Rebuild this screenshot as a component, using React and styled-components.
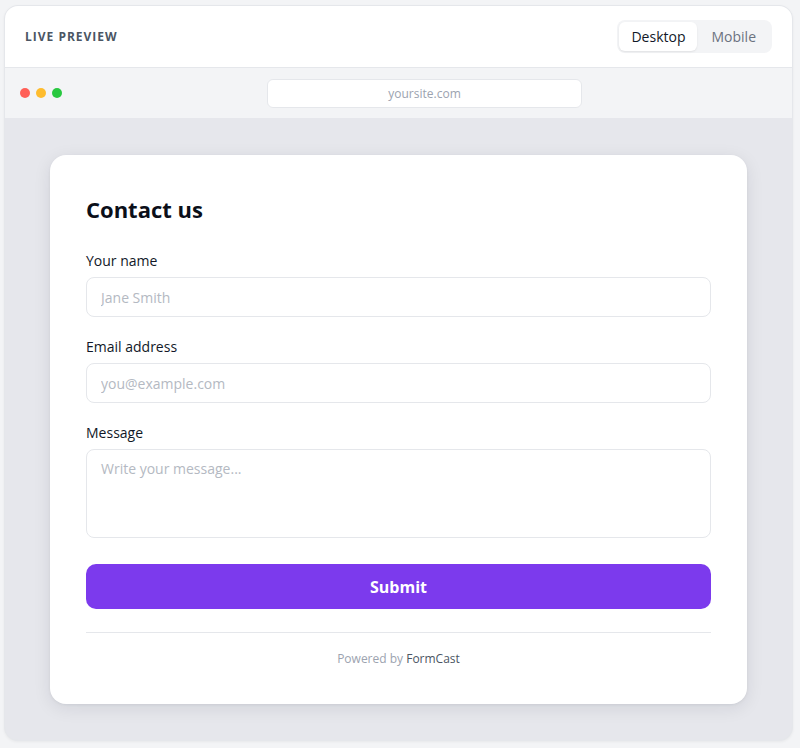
import React from "react";
import styled, { createGlobalStyle } from "styled-components";

const Global = createGlobalStyle`
  html, body { margin: 0; padding: 0; background: #f3f4f6; }
  body { font-family: "Open Sans", "Noto Sans", sans-serif; }
  * { box-sizing: border-box; }
`;

const Page = styled.div`
  padding: 5px 7px 7px 4px;
`;

const Frame = styled.div`
  height: 736px;
  display: flex;
  flex-direction: column;
  background: #e6e7ec;
  border: 1px solid #e5e7eb;
  border-radius: 14px;
  overflow: hidden;
  box-shadow: 0 1px 3px rgba(0, 0, 0, 0.05);
`;

const Header = styled.div`
  height: 62px;
  flex: none;
  display: flex;
  align-items: center;
  justify-content: space-between;
  padding: 0 20px;
  background: #fff;
  border-bottom: 1px solid #e5e7eb;
`;

const Eyebrow = styled.div`
  font-size: 12px;
  font-weight: 700;
  letter-spacing: 1px;
  color: #4b5563;
  text-transform: uppercase;
`;

const Toggle = styled.div`
  display: flex;
  padding: 2px;
  background: #f3f4f6;
  border-radius: 8px;
`;

const ToggleBtn = styled.button`
  border: none;
  font-family: inherit;
  font-size: 14px;
  height: 29px;
  padding: 0 ${(p) => (p.$active ? "12px" : "14px")};
  border-radius: 6px;
  cursor: pointer;
  background: ${(p) => (p.$active ? "#fff" : "transparent")};
  color: ${(p) => (p.$active ? "#111827" : "#6b7280")};
  box-shadow: ${(p) => (p.$active ? "0 1px 2px rgba(0,0,0,0.08)" : "none")};
`;

const BrowserBar = styled.div`
  height: 50px;
  flex: none;
  display: flex;
  align-items: center;
  gap: 15px;
  padding: 0 20px 0 15px;
  background: #f3f4f6;
`;

const Dots = styled.div`
  display: flex;
  gap: 6px;
`;

const Dot = styled.span`
  width: 10px;
  height: 10px;
  border-radius: 50%;
  background: ${(p) => p.$color};
`;

const UrlWrap = styled.div`
  flex: 1;
  display: flex;
  justify-content: center;
`;

const Url = styled.div`
  width: 315px;
  height: 29px;
  background: #fff;
  border: 1px solid #e5e7eb;
  border-radius: 6px;
  display: flex;
  align-items: center;
  justify-content: center;
  font-size: 12px;
  color: #9ca3af;
`;

const Canvas = styled.div`
  flex: 1;
  display: flex;
  justify-content: center;
  padding: 37px 0;
`;

const Card = styled.div`
  width: 697px;
  background: #fff;
  border-radius: 16px;
  padding: 36px;
  box-shadow: 0 4px 18px rgba(15, 23, 42, 0.09), 0 1px 3px rgba(15, 23, 42, 0.06);
  display: flex;
  flex-direction: column;
`;

const Title = styled.h1`
  margin: 4px 0 28px;
  font-size: 22px;
  line-height: 28px;
  font-weight: 700;
  color: #0b0f19;
`;

const Fields = styled.div`
  display: flex;
  flex-direction: column;
  gap: 20px;
`;

const Field = styled.label`
  display: flex;
  flex-direction: column;
  gap: 6px;
`;

const Label = styled.span`
  font-size: 14px;
  line-height: 20px;
  color: #111827;
`;

const inputBase = `
  width: 100%;
  border: 1px solid #e5e7eb;
  border-radius: 8px;
  font-family: inherit;
  font-size: 14px;
  color: #111827;
  padding: 0 14px;
  outline: none;
  background: #fff;
  &::placeholder { color: #b4b9c2; }
`;

const Input = styled.input`
  ${inputBase}
  height: 40px;
`;

const TextArea = styled.textarea`
  ${inputBase}
  height: 89px;
  padding-top: 9px;
  resize: none;
  line-height: 20px;
`;

const Submit = styled.button`
  margin-top: 26px;
  height: 45px;
  border: none;
  border-radius: 10px;
  background: #7c3aed;
  color: #fff;
  font-family: inherit;
  font-size: 16px;
  font-weight: 700;
  cursor: pointer;
`;

const Divider = styled.hr`
  margin: 23px 0 0;
  border: none;
  border-top: 1px solid #e5e7eb;
`;

const Footer = styled.div`
  margin-top: 17px;
  text-align: center;
  font-size: 12px;
  line-height: 18px;
  color: #9ca3af;
`;

const Brand = styled.span`
  color: #4b5563;
`;

export default function App() {
  return (
    <Page>
      <Global />
      <Frame>
        <Header>
          <Eyebrow>Live preview</Eyebrow>
          <Toggle>
            <ToggleBtn $active>Desktop</ToggleBtn>
            <ToggleBtn>Mobile</ToggleBtn>
          </Toggle>
        </Header>
        <BrowserBar>
          <Dots>
            <Dot $color="#ff5f57" />
            <Dot $color="#febc2e" />
            <Dot $color="#28c840" />
          </Dots>
          <UrlWrap>
            <Url>yoursite.com</Url>
          </UrlWrap>
        </BrowserBar>
        <Canvas>
          <Card>
            <Title>Contact us</Title>
            <Fields>
              <Field>
                <Label>Your name</Label>
                <Input placeholder="Jane Smith" />
              </Field>
              <Field>
                <Label>Email address</Label>
                <Input placeholder="you@example.com" />
              </Field>
              <Field>
                <Label>Message</Label>
                <TextArea placeholder="Write your message..." />
              </Field>
            </Fields>
            <Submit>Submit</Submit>
            <Divider />
            <Footer>
              Powered by <Brand>FormCast</Brand>
            </Footer>
          </Card>
        </Canvas>
      </Frame>
    </Page>
  );
}
